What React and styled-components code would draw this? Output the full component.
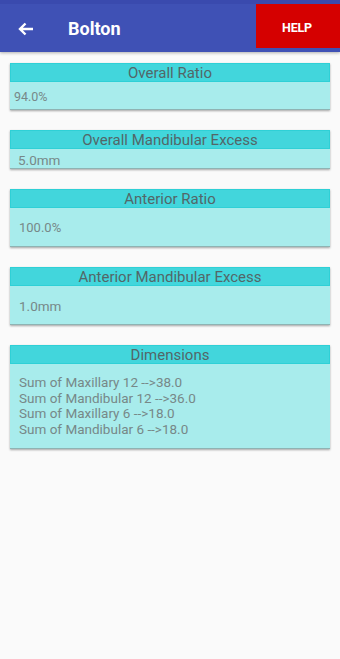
import React from "react";
import styled, { createGlobalStyle } from "styled-components";

const GlobalStyle = createGlobalStyle`
  html, body {
    margin: 0;
    padding: 0;
    background: #fafafa;
    font-family: Roboto, "Noto Sans", "Liberation Sans", sans-serif;
  }
`;

const cards = [
  { title: "Overall Ratio", lines: ["94.0%"], height: 27, indent: 4, size: 12.5 },
  { title: "Overall Mandibular Excess", lines: ["5.0mm"], height: 19, indent: 8, size: 13.5 },
  { title: "Anterior Ratio", lines: ["100.0%"], height: 38, indent: 9, size: 13 },
  { title: "Anterior Mandibular Excess", lines: ["1.0mm"], height: 38, indent: 9, size: 13.5 },
  {
    title: "Dimensions",
    lines: [
      "Sum of Maxillary 12 -->38.0",
      "Sum of Mandibular 12 -->36.0",
      "Sum of Maxillary 6 -->18.0",
      "Sum of Mandibular 6 -->18.0",
    ],
    height: 84,
    indent: 9,
    size: 13.5,
    list: true,
  },
];

export default function App() {
  return (
    <Screen>
      <GlobalStyle />
      <AppBar>
        <BackButton aria-label="back">
          <svg width="16" height="14" viewBox="0 0 16 14">
            <path
              d="M15 7H2.5M7.5 1.5L2 7l5.5 5.5"
              fill="none"
              stroke="#fff"
              strokeWidth="2.4"
            />
          </svg>
        </BackButton>
        <Title>Bolton</Title>
        <HelpButton>HELP</HelpButton>
      </AppBar>
      <Content>
        {cards.map((c) => (
          <Card key={c.title}>
            <CardHeader>{c.title}</CardHeader>
            <CardBody $height={c.height} $indent={c.indent} $list={c.list} $size={c.size}>
              {c.lines.map((l) => (
                <Line key={l} $list={c.list}>{l}</Line>
              ))}
            </CardBody>
          </Card>
        ))}
      </Content>
    </Screen>
  );
}

const Screen = styled.div`
  width: 340px;
  min-height: 659px;
  background: #fafafa;
`;

const AppBar = styled.div`
  height: 52px;
  background: #3f51b5;
  border-top: 4px solid #3a4aae;
  box-sizing: border-box;
  display: flex;
  align-items: center;
  box-shadow: 0 1px 3px rgba(0, 0, 0, 0.3);
  position: relative;
  z-index: 2;
`;

const BackButton = styled.div`
  width: 18px;
  margin-left: 18px;
  display: flex;
  align-items: center;
  padding-top: 1px;
`;

const Title = styled.div`
  margin-left: 32px;
  color: #fff;
  font-size: 18px;
  font-weight: 700;
  flex: 1;
`;

const HelpButton = styled.div`
  width: 84px;
  height: 44px;
  align-self: flex-start;
  background: #d50000;
  color: #fff;
  font-size: 12.5px;
  font-weight: 700;
  letter-spacing: -0.2px;
  display: flex;
  align-items: center;
  justify-content: center;
  padding: 2px 2px 0 0;
  box-sizing: border-box;
`;

const Content = styled.div`
  padding: 11px 10px 0;
  display: flex;
  flex-direction: column;
  gap: 20px;
`;

const Card = styled.div`
  background: #a8ecec;
  box-shadow: 0 1px 2px rgba(0, 0, 0, 0.35);
  border-bottom: 1px solid #8fb3b3;
`;

const CardHeader = styled.div`
  height: 19px;
  box-sizing: border-box;
  background: #42d6dc;
  border: 1px solid #2fd0d6;
  color: #536668;
  font-size: 15px;
  line-height: 18px;
  text-align: center;
`;

const CardBody = styled.div`
  height: ${(p) => p.$height}px;
  box-sizing: border-box;
  padding: ${(p) => (p.$list ? "11px" : "0")} 0 0 ${(p) => p.$indent}px;
  display: flex;
  flex-direction: column;
  justify-content: ${(p) => (p.$list ? "flex-start" : "center")};
  color: #778888;
  font-size: ${(p) => p.$size}px;
`;

const Line = styled.div`
  line-height: ${(p) => (p.$list ? "15.7px" : "14px")};
  padding-top: ${(p) => (p.$list ? "0" : "2px")};
`;
